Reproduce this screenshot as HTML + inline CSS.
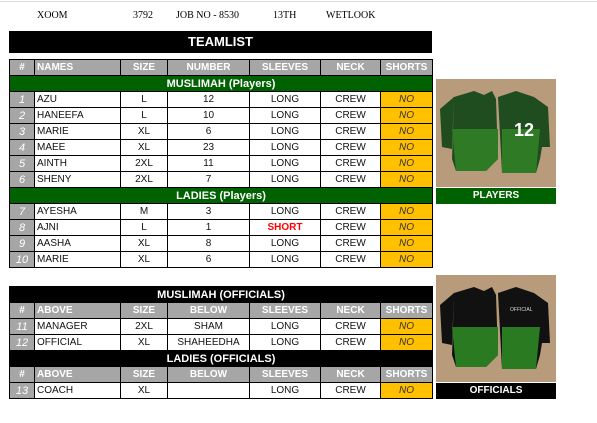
<!DOCTYPE html>
<html><head><style>
body{margin:0;width:597px;height:423px;background:#fff;position:relative;overflow:hidden;font-family:"Liberation Sans",Arial,sans-serif;}
.top{position:absolute;top:10px;font-family:"Liberation Serif",serif;font-size:10px;color:#000}
table{position:absolute;border-collapse:collapse;table-layout:fixed;font-size:10px;}
td{border:1px solid #000;padding:0 2px;height:15px;text-align:center;white-space:nowrap;overflow:hidden;line-height:14px;color:#111}
td.n{background:#a6a6a6;color:#fff;font-style:italic;font-size:11px;}
td.l{text-align:left}
td.y{background:#ffc000;font-style:italic;color:#333}
tr.h td{background:#a6a6a6;color:#fff;font-weight:bold;}
tr.g td{background:#006100;color:#fff;font-weight:bold;font-size:11px}
tr.b td{background:#000;color:#fff;font-weight:bold;font-size:11px}
.red{color:#f00!important;font-weight:bold}
.img{position:absolute;background:#b89b7a;overflow:hidden}
.lab{position:absolute;color:#fff;font-weight:bold;font-size:10px;text-align:center;line-height:16px}
</style></head><body>
<div style="position:absolute;left:0;top:1px;width:597px;height:1px;background:#ddd"></div>
<div class="top" style="left:37px">XOOM</div>
<div class="top" style="left:133px">3792</div>
<div class="top" style="left:176px">JOB NO - 8530</div>
<div class="top" style="left:273px">13TH</div>
<div class="top" style="left:326px">WETLOOK</div>
<div style="position:absolute;left:9px;top:31px;width:423px;height:22px;background:#000;color:#fff;font-weight:bold;font-size:13px;text-align:center;line-height:22px">TEAMLIST</div>

<table style="left:9px;top:59px;width:423px">
<colgroup><col style="width:25px"><col style="width:86px"><col style="width:47px"><col style="width:82px"><col style="width:71px"><col style="width:60px"><col style="width:52px"></colgroup>
<tr class="h"><td>#</td><td class="l">NAMES</td><td>SIZE</td><td>NUMBER</td><td>SLEEVES</td><td>NECK</td><td>SHORTS</td></tr>
<tr class="g"><td colspan="7">MUSLIMAH (Players)</td></tr>
<tr><td class="n">1</td><td class="l">AZU</td><td>L</td><td>12</td><td>LONG</td><td>CREW</td><td class="y">NO</td></tr>
<tr><td class="n">2</td><td class="l">HANEEFA</td><td>L</td><td>10</td><td>LONG</td><td>CREW</td><td class="y">NO</td></tr>
<tr><td class="n">3</td><td class="l">MARIE</td><td>XL</td><td>6</td><td>LONG</td><td>CREW</td><td class="y">NO</td></tr>
<tr><td class="n">4</td><td class="l">MAEE</td><td>XL</td><td>23</td><td>LONG</td><td>CREW</td><td class="y">NO</td></tr>
<tr><td class="n">5</td><td class="l">AINTH</td><td>2XL</td><td>11</td><td>LONG</td><td>CREW</td><td class="y">NO</td></tr>
<tr><td class="n">6</td><td class="l">SHENY</td><td>2XL</td><td>7</td><td>LONG</td><td>CREW</td><td class="y">NO</td></tr>
<tr class="g"><td colspan="7">LADIES (Players)</td></tr>
<tr><td class="n">7</td><td class="l">AYESHA</td><td>M</td><td>3</td><td>LONG</td><td>CREW</td><td class="y">NO</td></tr>
<tr><td class="n">8</td><td class="l">AJNI</td><td>L</td><td>1</td><td class="red">SHORT</td><td>CREW</td><td class="y">NO</td></tr>
<tr><td class="n">9</td><td class="l">AASHA</td><td>XL</td><td>8</td><td>LONG</td><td>CREW</td><td class="y">NO</td></tr>
<tr><td class="n">10</td><td class="l">MARIE</td><td>XL</td><td>6</td><td>LONG</td><td>CREW</td><td class="y">NO</td></tr>
</table>

<table style="left:9px;top:286px;width:423px">
<colgroup><col style="width:25px"><col style="width:86px"><col style="width:47px"><col style="width:82px"><col style="width:71px"><col style="width:60px"><col style="width:52px"></colgroup>
<tr class="b"><td colspan="7">MUSLIMAH (OFFICIALS)</td></tr>
<tr class="h"><td>#</td><td class="l">ABOVE</td><td>SIZE</td><td>BELOW</td><td>SLEEVES</td><td>NECK</td><td>SHORTS</td></tr>
<tr><td class="n">11</td><td class="l">MANAGER</td><td>2XL</td><td>SHAM</td><td>LONG</td><td>CREW</td><td class="y">NO</td></tr>
<tr><td class="n">12</td><td class="l">OFFICIAL</td><td>XL</td><td>SHAHEEDHA</td><td>LONG</td><td>CREW</td><td class="y">NO</td></tr>
<tr class="b"><td colspan="7">LADIES (OFFICIALS)</td></tr>
<tr class="h"><td>#</td><td class="l">ABOVE</td><td>SIZE</td><td>BELOW</td><td>SLEEVES</td><td>NECK</td><td>SHORTS</td></tr>
<tr><td class="n">13</td><td class="l">COACH</td><td>XL</td><td></td><td>LONG</td><td>CREW</td><td class="y">NO</td></tr>
</table>

<div class="img" style="left:436px;top:79px;width:120px;height:108px">
<svg width="120" height="108"><path d="M18 18 L38 12 L48 16 L56 12 L60 20 L62 80 L50 92 L20 92 L16 80 Z M4 30 L18 18 L16 70 L6 68 Z" fill="#1f4d1f"/><path d="M62 18 L80 12 L98 18 L112 28 L114 68 L106 68 L104 80 L100 94 L66 94 Z" fill="#1f4d1f"/><path d="M16 50 L62 50 L62 80 L50 92 L20 92 Z M66 50 L104 50 L100 94 L66 94 Z" fill="#2f7a25"/><text x="78" y="57" fill="#fff" font-size="18" font-weight="bold" font-family="Liberation Sans">12</text></svg>
</div>
<div class="lab" style="left:436px;top:188px;width:120px;height:16px;background:#006100">PLAYERS</div>
<div class="img" style="left:436px;top:275px;width:120px;height:107px">
<svg width="120" height="107"><path d="M18 18 L38 12 L48 16 L56 12 L60 20 L62 80 L50 92 L20 92 L16 80 Z M4 30 L18 18 L16 70 L6 68 Z" fill="#111"/><path d="M62 18 L80 12 L98 18 L112 28 L114 68 L106 68 L104 80 L100 94 L66 94 Z" fill="#111"/><path d="M16 52 L62 52 L62 80 L50 92 L20 92 Z M66 52 L104 52 L100 94 L66 94 Z" fill="#2a7a22"/><text x="74" y="36" fill="#ddd" font-size="5" font-family="Liberation Sans">OFFICIAL</text></svg>
</div>
<div class="lab" style="left:436px;top:383px;width:120px;height:16px;background:#000">OFFICIALS</div>
</body></html>
